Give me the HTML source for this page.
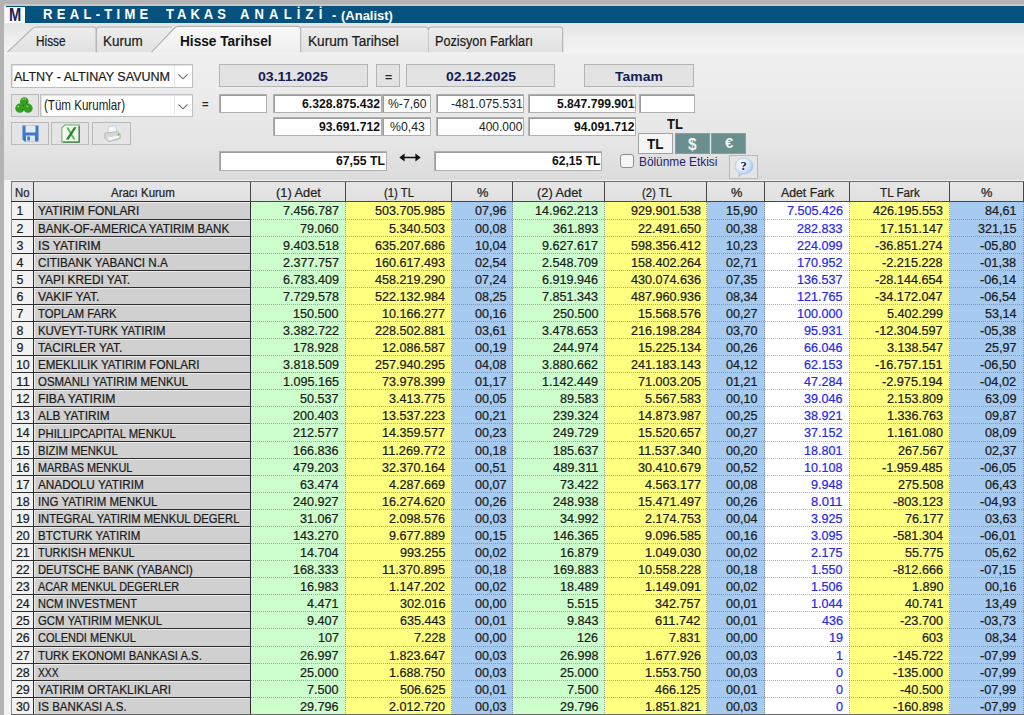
<!DOCTYPE html>
<html lang="tr"><head><meta charset="utf-8"><title>REAL-TIME TAKAS ANALİZİ - (Analist)</title>
<style>
html,body{margin:0;padding:0;}
html{background:#b3b3b3;overflow:hidden;}
body{width:1024px;height:715px;overflow:hidden;position:relative;background:#b3b3b3;font-family:"Liberation Sans",sans-serif;font-size:12.6px;color:#1a1a1a;}
div,span{box-sizing:border-box;}
.a{position:absolute;}
.t{position:absolute;white-space:nowrap;transform-origin:0 50%;display:inline-block;}
.k{-webkit-text-stroke:0.22px currentColor;}

</style></head><body>
<div class="a" style="left:4px;top:4px;width:1020px;height:711px;background:#ececec;"></div>
<div class="a" style="left:4px;top:4px;width:1020px;height:2px;background:#c8c8c8;"></div>
<div class="a" style="left:5.5px;top:6px;width:1019px;height:17px;background:#05527f;"></div>
<div class="a" style="left:5.4px;top:7px;width:19.3px;height:15.8px;background:#fdfdfd;"></div>
<span class="t" style="left:8.90px;top:4.95px;height:21px;line-height:21px;font-size:17.6px;color:#1c1c5c;font-weight:bold;transform:scaleX(0.8321);">M</span>
<span class="t" style="left:43.2px;top:6.07px;height:17px;line-height:17px;font-size:14.8px;font-weight:bold;color:#fff;letter-spacing:4.886px;transform:scaleX(0.88);">REAL-TIME</span>
<span class="t" style="left:166px;top:6.07px;height:17px;line-height:17px;font-size:14.8px;font-weight:bold;color:#fff;letter-spacing:4.576px;transform:scaleX(0.88);">TAKAS</span>
<span class="t" style="left:240px;top:6.07px;height:17px;line-height:17px;font-size:14.8px;font-weight:bold;color:#fff;letter-spacing:5.859px;transform:scaleX(0.88);">ANALİZİ</span>
<span class="t" style="left:331.50px;top:7.46px;height:17px;line-height:17px;font-size:14.4px;color:#fff;font-weight:bold;transform:scaleX(0.8758);">-</span>
<span class="t" style="left:341.00px;top:8.18px;height:16px;line-height:16px;font-size:13.2px;color:#fff;font-weight:bold;transform:scaleX(0.9848);">(Analist)</span>
<div class="a" style="left:4px;top:23px;width:1020px;height:29px;background:linear-gradient(#e4e4e4,#ededed 45%,#f3f3f3);"></div>
<div class="a" style="left:4px;top:52.2px;width:1020px;height:129.8px;background:linear-gradient(#f5f5f5 0,#efefef 2.5px,#ececec 30%,#e5e5e5 70%,#dbdbdb 100%);"></div>
<div class="a" style="left:4px;top:180px;width:1020px;height:535px;background:#f2f2f2;"></div>
<svg class="a" style="left:0;top:23px" width="1024" height="31" viewBox="0 23 1024 31">
<defs><linearGradient id="tg" x1="0" y1="0" x2="0" y2="1"><stop offset="0" stop-color="#ededed"/><stop offset="1" stop-color="#e1e1e1"/></linearGradient>
<linearGradient id="ta" x1="0" y1="0" x2="0" y2="1"><stop offset="0" stop-color="#f8f8f8"/><stop offset="1" stop-color="#efefef"/></linearGradient></defs>
<path d="M7.4 52.2 L32.3 28.6 Q33.8 27 36.5 27 L93.3 27 Q96.3 27 96.3 30 L96.3 52.2 Z" fill="url(#tg)" stroke="none"/>
<path d="M7.4 52.2 L32.3 28.6 Q33.8 27 36.5 27 L93.3 27 Q96.3 27 96.3 30 L96.3 52.2" fill="none" stroke="#b0b0b0" stroke-width="1.1"/>
<path d="M96.3 52.2 L96.3 30 Q96.3 27 99.3 27 L172 27 L151 52.2 Z" fill="url(#tg)" stroke="none"/>
<path d="M96.3 52.2 L96.3 30 Q96.3 27 99.3 27 L172 27" fill="none" stroke="#b0b0b0" stroke-width="1.1"/>
<path d="M300.7 52.2 L300.7 30 Q300.7 27 303.7 27 L425.5 27 Q428.5 27 428.5 30 L428.5 52.2 Z" fill="url(#tg)" stroke="none"/>
<path d="M300.7 27 L425.5 27 Q428.5 27 428.5 30 L428.5 52.2" fill="none" stroke="#b0b0b0" stroke-width="1.1"/>
<path d="M428.5 52.2 L428.5 30 Q428.5 27 431.5 27 L559.7 27 Q562.7 27 562.7 30 L562.7 52.2 Z" fill="url(#tg)" stroke="none"/>
<path d="M428.5 30 Q428.5 27 431.5 27 L559.7 27 Q562.7 27 562.7 30 L562.7 52.2" fill="none" stroke="#b0b0b0" stroke-width="1.1"/>
<path d="M151 53 L174.5 28 Q176 26.4 179 26.4 L297.7 26.4 Q300.7 26.4 300.7 29.4 L300.7 53 Z" fill="url(#ta)" stroke="none"/>
<path d="M151.5 52.2 L174.5 28 Q176 26.4 179 26.4 L297.7 26.4 Q300.7 26.4 300.7 29.4 L300.7 52.2" fill="none" stroke="#b0b0b0" stroke-width="1.1"/>
</svg>
<span class="t k" style="left:36.00px;top:33.40px;height:17px;line-height:17px;font-size:14px;color:#1a1a1a;transform:scaleX(0.8455);">Hisse</span>
<span class="t k" style="left:102.80px;top:33.40px;height:17px;line-height:17px;font-size:14px;color:#1a1a1a;transform:scaleX(0.9604);">Kurum</span>
<span class="t" style="left:179.50px;top:33.40px;height:17px;line-height:17px;font-size:14px;color:#111;font-weight:bold;transform:scaleX(0.9745);">Hisse Tarihsel</span>
<span class="t k" style="left:307.80px;top:33.40px;height:17px;line-height:17px;font-size:14px;color:#1a1a1a;transform:scaleX(0.9762);">Kurum Tarihsel</span>
<span class="t k" style="left:434.70px;top:33.40px;height:17px;line-height:17px;font-size:14px;color:#1a1a1a;transform:scaleX(0.9053);">Pozisyon Farkları</span>
<div class="a" style="left:10.5px;top:64px;width:182.5px;height:23.5px;background:#fff;border:1px solid #bebebe;box-shadow:inset 1px 1px 0 #e2e2e2;"></div>
<span class="t k" style="left:13.80px;top:68.90px;height:16px;line-height:16px;font-size:13.7px;color:#1a1a1a;transform:scaleX(0.9159);">ALTNY - ALTINAY SAVUNM</span>
<div class="a" style="left:173.5px;top:65.5px;width:1px;height:20.5px;background:#e9e9e9;"></div>
<svg class="a" style="left:177.0px;top:73.05px" width="12" height="8" viewBox="0 0 12 8"><path d="M1.5 1.5 L6 5.8 L10.5 1.5" fill="none" stroke="#707070" stroke-width="1.1"/></svg>
<div class="a" style="left:40px;top:94.3px;width:153px;height:22.7px;background:#fff;border:1px solid #bebebe;box-shadow:inset 1px 1px 0 #e2e2e2;"></div>
<span class="t" style="left:43.90px;top:96.90px;height:17px;line-height:17px;font-size:14.3px;color:#1a1a1a;transform:scaleX(0.8091);">(Tüm Kurumlar)</span>
<div class="a" style="left:173.5px;top:95.8px;width:1px;height:19.7px;background:#e9e9e9;"></div>
<svg class="a" style="left:177.0px;top:102.94999999999999px" width="12" height="8" viewBox="0 0 12 8"><path d="M1.5 1.5 L6 5.8 L10.5 1.5" fill="none" stroke="#707070" stroke-width="1.1"/></svg>
<div class="a" style="left:10.5px;top:94.3px;width:28.3px;height:22.7px;background:#e5e5e5;border:1px solid #b9b9b9;"></div>
<div class="a" style="left:10.5px;top:122.3px;width:38.3px;height:23.2px;background:#e5e5e5;border:1px solid #b9b9b9;"></div>
<div class="a" style="left:51.4px;top:122.3px;width:38.1px;height:23.2px;background:#e5e5e5;border:1px solid #b9b9b9;"></div>
<div class="a" style="left:92.3px;top:122.3px;width:38.3px;height:23.2px;background:#e5e5e5;border:1px solid #b9b9b9;"></div>
<svg class="a" style="left:15px;top:96.5px" width="18" height="17" viewBox="0 0 18 17"><g fill="#33a022"><circle cx="9.3" cy="4.6" r="4.3"/><circle cx="4.9" cy="11.2" r="4.6"/><circle cx="13" cy="11.2" r="4.6"/><rect x="5" y="6" width="8" height="6"/></g><g fill="#9be070"><circle cx="8" cy="2.2" r="0.8"/><circle cx="10.4" cy="2" r="0.7"/><circle cx="3.3" cy="9.6" r="0.8"/><circle cx="12.2" cy="9.4" r="0.8"/></g><g fill="#1c5c18"><circle cx="11.6" cy="5.4" r="0.6"/><circle cx="8.2" cy="8.4" r="0.6"/><circle cx="7.4" cy="12.6" r="0.6"/><circle cx="15" cy="12" r="0.6"/></g></svg>
<svg class="a" style="left:21.5px;top:125px" width="17" height="17" viewBox="0 0 17 17"><path d="M0.5 0.5 H16.5 V16.5 H2.5 L0.5 14.5 Z" fill="#3a7ac8"/><rect x="3.5" y="0.5" width="10" height="7" fill="#e4e9f0"/><rect x="4" y="10.5" width="9" height="6" fill="#dfe6ee"/><rect x="5.3" y="11.5" width="2.7" height="4" fill="#3a7ac8"/></svg>
<svg class="a" style="left:61px;top:123.7px" width="19" height="19" viewBox="0 0 19 19"><path d="M4 0.8 H18.2 V18.2 H0.8 V4 Z" fill="#f3f9f0" stroke="#7dbb7a" stroke-width="1.3"/><path d="M18.2 2 V18.2 H2" fill="none" stroke="#3c8447" stroke-width="1.3"/><path d="M5.3 3.6 H7.6 L14.4 15.4 H12.1 Z" fill="#62bb5e"/><path d="M13 3.3 H15.6 L7.6 15.6 H4.8 Z" fill="#23822a"/></svg>
<svg class="a" style="left:103.5px;top:124.5px" width="17" height="18" viewBox="0 0 17 18"><path d="M4.5 1.5 L11.5 0.8 L13 7 L4 8 Z" fill="#f4f8fc" stroke="#b5c6d8" stroke-width="0.7"/><path d="M0.8 8.2 L13.5 6.6 L16.3 9 L16.3 13.5 L5 16.8 L0.8 13 Z" fill="#d6d6d6" stroke="#acacac" stroke-width="0.7"/><path d="M3.5 12.6 L15 10.4 L15 12.6 L5 15.4 Z" fill="#f6f6f6"/><circle cx="14.4" cy="9.6" r="0.9" fill="#46b24a"/></svg>
<span class="t" style="left:202.30px;top:97.94px;height:13px;line-height:13px;font-size:11px;color:#222;font-weight:bold;transform:scaleX(1.0274);">=</span>
<div class="a" style="left:218.6px;top:64.4px;width:149.1px;height:23.1px;background:#e3e3e3;border:1px solid #b4b4b4;"></div>
<span class="t" style="left:257.70px;top:68.94px;height:16px;line-height:16px;font-size:13.6px;color:#141c56;font-weight:bold;transform:scaleX(1.0384);">03.11.2025</span>
<div class="a" style="left:375.8px;top:64.4px;width:24.4px;height:23.1px;background:#e3e3e3;border:1px solid #b4b4b4;"></div>
<span class="t" style="left:384.80px;top:70.54px;height:13px;line-height:13px;font-size:11px;color:#222;font-weight:bold;transform:scaleX(1.1208);">=</span>
<div class="a" style="left:406.3px;top:64.4px;width:148.6px;height:23.1px;background:#e3e3e3;border:1px solid #b4b4b4;"></div>
<span class="t" style="left:445.50px;top:68.94px;height:16px;line-height:16px;font-size:13.6px;color:#141c56;font-weight:bold;transform:scaleX(1.0284);">02.12.2025</span>
<div class="a" style="left:583.9px;top:64.4px;width:110.1px;height:23.1px;background:#e3e3e3;border:1px solid #b4b4b4;"></div>
<span class="t" style="left:615.40px;top:68.94px;height:16px;line-height:16px;font-size:13.6px;color:#141c56;font-weight:bold;transform:scaleX(1.0255);">Tamam</span>
<div class="a" style="left:218.6px;top:93.6px;width:48px;height:19.8px;background:#fff;border:1px solid #b0b0b0;box-shadow:inset 1px 1px 0 #9c9c9c;"></div>
<div class="a" style="left:272.5px;top:93.6px;width:109.1px;height:19.8px;background:#fff;border:1px solid #b0b0b0;box-shadow:inset 1px 1px 0 #9c9c9c;"></div>
<span class="t" style="left:301.70px;top:96.88px;height:15px;line-height:15px;font-size:12.6px;color:#111;font-weight:bold;transform:scaleX(0.9705);">6.328.875.432</span>
<div class="a" style="left:381.6px;top:93.6px;width:49.1px;height:19.8px;background:#fff;border:1px solid #b0b0b0;box-shadow:inset 1px 1px 0 #9c9c9c;"></div>
<span class="t" style="left:388.00px;top:96.88px;height:15px;line-height:15px;font-size:12.6px;color:#222;transform:scaleX(0.9669);">%-7,60</span>
<div class="a" style="left:436.2px;top:93.6px;width:88px;height:19.8px;background:#fff;border:1px solid #b0b0b0;box-shadow:inset 1px 1px 0 #9c9c9c;"></div>
<span class="t" style="left:450.60px;top:96.88px;height:15px;line-height:15px;font-size:12.6px;color:#222;transform:scaleX(0.9668);">-481.075.531</span>
<div class="a" style="left:527.5px;top:93.6px;width:108.7px;height:19.8px;background:#fff;border:1px solid #b0b0b0;box-shadow:inset 1px 1px 0 #9c9c9c;"></div>
<span class="t" style="left:556.60px;top:96.88px;height:15px;line-height:15px;font-size:12.6px;color:#111;font-weight:bold;transform:scaleX(0.9630);">5.847.799.901</span>
<div class="a" style="left:638.6px;top:93.6px;width:56.4px;height:19.8px;background:#fff;border:1px solid #b0b0b0;box-shadow:inset 1px 1px 0 #9c9c9c;"></div>
<div class="a" style="left:272.5px;top:117.2px;width:109.1px;height:19.2px;background:#fff;border:1px solid #b0b0b0;box-shadow:inset 1px 1px 0 #9c9c9c;"></div>
<span class="t" style="left:318.90px;top:119.98px;height:15px;line-height:15px;font-size:12.6px;color:#111;font-weight:bold;transform:scaleX(0.9673);">93.691.712</span>
<div class="a" style="left:381.6px;top:117.2px;width:49.1px;height:19.2px;background:#fff;border:1px solid #b0b0b0;box-shadow:inset 1px 1px 0 #9c9c9c;"></div>
<span class="t" style="left:390.00px;top:119.98px;height:15px;line-height:15px;font-size:12.6px;color:#222;transform:scaleX(0.9741);">%0,43</span>
<div class="a" style="left:436.2px;top:117.2px;width:88px;height:19.2px;background:#fff;border:1px solid #b0b0b0;box-shadow:inset 1px 1px 0 #9c9c9c;"></div>
<span class="t" style="left:479.00px;top:119.98px;height:15px;line-height:15px;font-size:12.6px;color:#222;transform:scaleX(0.9529);">400.000</span>
<div class="a" style="left:527.5px;top:117.2px;width:108.7px;height:19.2px;background:#fff;border:1px solid #b0b0b0;box-shadow:inset 1px 1px 0 #9c9c9c;"></div>
<span class="t" style="left:573.70px;top:119.98px;height:15px;line-height:15px;font-size:12.6px;color:#111;font-weight:bold;transform:scaleX(0.9594);">94.091.712</span>
<div class="a" style="left:218.6px;top:151px;width:168.2px;height:19.6px;background:#fff;border:1px solid #b0b0b0;box-shadow:inset 1px 1px 0 #9c9c9c;"></div>
<span class="t" style="left:336.00px;top:154.28px;height:15px;line-height:15px;font-size:12.6px;color:#111;font-weight:bold;transform:scaleX(0.9717);">67,55 TL</span>
<div class="a" style="left:434.4px;top:151px;width:167.8px;height:19.6px;background:#fff;border:1px solid #b0b0b0;box-shadow:inset 1px 1px 0 #9c9c9c;"></div>
<span class="t" style="left:551.50px;top:154.28px;height:15px;line-height:15px;font-size:12.6px;color:#111;font-weight:bold;transform:scaleX(0.9618);">62,15 TL</span>
<svg class="a" style="left:399.3px;top:152.3px" width="22" height="11" viewBox="0 0 22 11"><path d="M0.3 5.5 L5.6 1.6 V4.7 H16.4 V1.6 L21.7 5.5 L16.4 9.4 V6.3 H5.6 V9.4 Z" fill="#111"/></svg>
<span class="t" style="left:666.80px;top:116.37px;height:17px;line-height:17px;font-size:13.8px;color:#111;font-weight:bold;transform:scaleX(0.9372);">TL</span>
<div class="a" style="left:638.4px;top:132.5px;width:34.8px;height:21px;background:#f5f5f5;border:1px solid #a2a2a2;"></div>
<span class="t" style="left:647.00px;top:135.70px;height:17px;line-height:17px;font-size:14px;color:#111;font-weight:bold;transform:scaleX(0.9647);">TL</span>
<div class="a" style="left:675px;top:132.5px;width:35px;height:21px;background:#6b8e8e;border:1px solid #86a0a0;"></div>
<span class="t" style="left:688.30px;top:134.81px;height:19px;line-height:19px;font-size:16px;color:#f4f4f4;font-weight:bold;transform:scaleX(0.9665);">$</span>
<div class="a" style="left:711.3px;top:132.5px;width:34.7px;height:21px;background:#6b8e8e;border:1px solid #86a0a0;"></div>
<span class="t" style="left:724.50px;top:135.33px;height:17px;line-height:17px;font-size:14.5px;color:#eef2f2;font-weight:bold;transform:scaleX(1.0168);">€</span>
<div class="a" style="left:620.3px;top:154.3px;width:14.2px;height:14.2px;background:#f6f6f6;border:1px solid #8f8f8f;border-radius:3px;"></div>
<span class="t" style="left:639.00px;top:154.34px;height:16px;line-height:16px;font-size:13.6px;color:#1e2470;transform:scaleX(0.8716);">Bölünme Etkisi</span>
<div class="a" style="left:729.2px;top:155.2px;width:28.5px;height:23.4px;background:#e5e5e5;border:1px solid #b9b9b9;"></div>
<svg class="a" style="left:732.5px;top:156.5px" width="22" height="21" viewBox="0 0 22 21"><defs><radialGradient id="hg" cx="0.38" cy="0.3" r="0.8"><stop offset="0" stop-color="#ffffff"/><stop offset="0.5" stop-color="#d6e6f8"/><stop offset="1" stop-color="#86b0e2"/></radialGradient></defs><path d="M10.6 1 A9 8 0 1 1 9 16.8 L6 19.8 L6 15.6 A9 8 0 0 1 10.6 1 Z" fill="url(#hg)" stroke="#a9c3e3" stroke-width="0.7"/><text x="10.6" y="13.4" font-family="Liberation Serif, serif" font-weight="bold" font-size="12.5" text-anchor="middle" fill="#15206c">?</text></svg>
<div class="a" style="left:11px;top:181px;width:1013px;height:21px;background:#484848;"></div>
<div class="a" style="left:11px;top:181px;width:1013px;height:1px;background:#6e6e6e;"></div>
<div class="a" style="left:11px;top:181px;width:1px;height:20px;background:#7c7c7c;"></div>
<div class="a" style="left:11px;top:201px;width:240px;height:514px;background:#2e2e2e;"></div>
<div class="a" style="left:12px;top:182px;width:21px;height:19px;background:linear-gradient(#e6e6e6,#e1e1e1);"></div>
<span class="t k" style="left:15.45px;top:185.89px;height:15px;line-height:15px;font-size:12.3px;color:#222;transform:scaleX(0.9222);">No</span>
<div class="a" style="left:34px;top:182px;width:216px;height:19px;background:linear-gradient(#e6e6e6,#e1e1e1);"></div>
<span class="t k" style="left:110.90px;top:185.89px;height:15px;line-height:15px;font-size:12.3px;color:#222;transform:scaleX(0.9334);">Aracı Kurum</span>
<div class="a" style="left:251px;top:182px;width:94px;height:19px;background:linear-gradient(#e6e6e6,#e1e1e1);"></div>
<span class="t k" style="left:276.35px;top:185.89px;height:15px;line-height:15px;font-size:12.3px;color:#222;transform:scaleX(1.0424);">(1) Adet</span>
<div class="a" style="left:346px;top:182px;width:105px;height:19px;background:linear-gradient(#e6e6e6,#e1e1e1);"></div>
<span class="t k" style="left:384.20px;top:185.89px;height:15px;line-height:15px;font-size:12.3px;color:#222;transform:scaleX(0.9208);">(1) TL</span>
<div class="a" style="left:452px;top:182px;width:60px;height:19px;background:linear-gradient(#e6e6e6,#e1e1e1);"></div>
<span class="t k" style="left:477.05px;top:185.89px;height:15px;line-height:15px;font-size:12.3px;color:#222;transform:scaleX(1.0424);">%</span>
<div class="a" style="left:513px;top:182px;width:91px;height:19px;background:linear-gradient(#e6e6e6,#e1e1e1);"></div>
<span class="t k" style="left:536.80px;top:185.89px;height:15px;line-height:15px;font-size:12.3px;color:#222;transform:scaleX(1.0424);">(2) Adet</span>
<div class="a" style="left:605px;top:182px;width:101px;height:19px;background:linear-gradient(#e6e6e6,#e1e1e1);"></div>
<span class="t k" style="left:641.55px;top:185.89px;height:15px;line-height:15px;font-size:12.3px;color:#222;transform:scaleX(0.9208);">(2) TL</span>
<div class="a" style="left:707px;top:182px;width:57px;height:19px;background:linear-gradient(#e6e6e6,#e1e1e1);"></div>
<span class="t k" style="left:730.75px;top:185.89px;height:15px;line-height:15px;font-size:12.3px;color:#222;transform:scaleX(1.0424);">%</span>
<div class="a" style="left:765px;top:182px;width:84px;height:19px;background:linear-gradient(#e6e6e6,#e1e1e1);"></div>
<span class="t k" style="left:780.95px;top:185.89px;height:15px;line-height:15px;font-size:12.3px;color:#222;">Adet Fark</span>
<div class="a" style="left:850px;top:182px;width:99px;height:19px;background:linear-gradient(#e6e6e6,#e1e1e1);"></div>
<span class="t k" style="left:880.20px;top:185.89px;height:15px;line-height:15px;font-size:12.3px;color:#222;transform:scaleX(0.9495);">TL Fark</span>
<div class="a" style="left:950px;top:182px;width:73px;height:19px;background:linear-gradient(#e6e6e6,#e1e1e1);"></div>
<span class="t k" style="left:981.40px;top:185.89px;height:15px;line-height:15px;font-size:12.3px;color:#222;transform:scaleX(1.0424);">%</span>
<div class="a" style="left:251px;top:202px;width:95px;height:513px;background:#ccffcc;"></div>
<div class="a" style="left:346px;top:202px;width:106px;height:513px;background:#ffff80;"></div>
<div class="a" style="left:452px;top:202px;width:61px;height:513px;background:#a6caf0;"></div>
<div class="a" style="left:513px;top:202px;width:92px;height:513px;background:#ccffcc;"></div>
<div class="a" style="left:605px;top:202px;width:102px;height:513px;background:#ffff80;"></div>
<div class="a" style="left:707px;top:202px;width:58px;height:513px;background:#a6caf0;"></div>
<div class="a" style="left:765px;top:202px;width:85px;height:513px;background:#ffffff;"></div>
<div class="a" style="left:850px;top:202px;width:100px;height:513px;background:#ffff80;"></div>
<div class="a" style="left:950px;top:202px;width:74px;height:513px;background:#a6caf0;"></div>
<div class="a" style="left:345px;top:202px;width:0px;height:513px;border-left:1px dotted rgba(100,100,100,.5);"></div>
<div class="a" style="left:451px;top:202px;width:0px;height:513px;border-left:1px dotted rgba(100,100,100,.5);"></div>
<div class="a" style="left:512px;top:202px;width:0px;height:513px;border-left:1px dotted rgba(100,100,100,.5);"></div>
<div class="a" style="left:604px;top:202px;width:0px;height:513px;border-left:1px dotted rgba(100,100,100,.5);"></div>
<div class="a" style="left:706px;top:202px;width:0px;height:513px;border-left:1px dotted rgba(100,100,100,.5);"></div>
<div class="a" style="left:764px;top:202px;width:0px;height:513px;border-left:1px dotted rgba(100,100,100,.5);"></div>
<div class="a" style="left:849px;top:202px;width:0px;height:513px;border-left:1px dotted rgba(100,100,100,.5);"></div>
<div class="a" style="left:949px;top:202px;width:0px;height:513px;border-left:1px dotted rgba(100,100,100,.5);"></div>
<div class="a" style="left:1023px;top:202px;width:0px;height:513px;border-left:1px dotted rgba(100,100,100,.5);"></div>
<div class="a" style="left:12px;top:202px;width:21px;height:17px;background:#f2f2f2;"></div>
<div class="a" style="left:34px;top:202px;width:216px;height:17px;background:#d0d0d0;border-left:1px solid #ececec;border-top:1px solid #ebebeb;"></div>
<div class="a" style="left:12px;top:220px;width:21px;height:16px;background:#f2f2f2;"></div>
<div class="a" style="left:34px;top:220px;width:216px;height:16px;background:#d0d0d0;border-left:1px solid #ececec;border-top:1px solid #ebebeb;"></div>
<div class="a" style="left:12px;top:237px;width:21px;height:16px;background:#f2f2f2;"></div>
<div class="a" style="left:34px;top:237px;width:216px;height:16px;background:#d0d0d0;border-left:1px solid #ececec;border-top:1px solid #ebebeb;"></div>
<div class="a" style="left:12px;top:254px;width:21px;height:16px;background:#f2f2f2;"></div>
<div class="a" style="left:34px;top:254px;width:216px;height:16px;background:#d0d0d0;border-left:1px solid #ececec;border-top:1px solid #ebebeb;"></div>
<div class="a" style="left:12px;top:271px;width:21px;height:16px;background:#f2f2f2;"></div>
<div class="a" style="left:34px;top:271px;width:216px;height:16px;background:#d0d0d0;border-left:1px solid #ececec;border-top:1px solid #ebebeb;"></div>
<div class="a" style="left:12px;top:288px;width:21px;height:16px;background:#f2f2f2;"></div>
<div class="a" style="left:34px;top:288px;width:216px;height:16px;background:#d0d0d0;border-left:1px solid #ececec;border-top:1px solid #ebebeb;"></div>
<div class="a" style="left:12px;top:305px;width:21px;height:16px;background:#f2f2f2;"></div>
<div class="a" style="left:34px;top:305px;width:216px;height:16px;background:#d0d0d0;border-left:1px solid #ececec;border-top:1px solid #ebebeb;"></div>
<div class="a" style="left:12px;top:322px;width:21px;height:16px;background:#f2f2f2;"></div>
<div class="a" style="left:34px;top:322px;width:216px;height:16px;background:#d0d0d0;border-left:1px solid #ececec;border-top:1px solid #ebebeb;"></div>
<div class="a" style="left:12px;top:339px;width:21px;height:16px;background:#f2f2f2;"></div>
<div class="a" style="left:34px;top:339px;width:216px;height:16px;background:#d0d0d0;border-left:1px solid #ececec;border-top:1px solid #ebebeb;"></div>
<div class="a" style="left:12px;top:356px;width:21px;height:16px;background:#f2f2f2;"></div>
<div class="a" style="left:34px;top:356px;width:216px;height:16px;background:#d0d0d0;border-left:1px solid #ececec;border-top:1px solid #ebebeb;"></div>
<div class="a" style="left:12px;top:373px;width:21px;height:16px;background:#f2f2f2;"></div>
<div class="a" style="left:34px;top:373px;width:216px;height:16px;background:#d0d0d0;border-left:1px solid #ececec;border-top:1px solid #ebebeb;"></div>
<div class="a" style="left:12px;top:390px;width:21px;height:16px;background:#f2f2f2;"></div>
<div class="a" style="left:34px;top:390px;width:216px;height:16px;background:#d0d0d0;border-left:1px solid #ececec;border-top:1px solid #ebebeb;"></div>
<div class="a" style="left:12px;top:407px;width:21px;height:16px;background:#f2f2f2;"></div>
<div class="a" style="left:34px;top:407px;width:216px;height:16px;background:#d0d0d0;border-left:1px solid #ececec;border-top:1px solid #ebebeb;"></div>
<div class="a" style="left:12px;top:424px;width:21px;height:17px;background:#f2f2f2;"></div>
<div class="a" style="left:34px;top:424px;width:216px;height:17px;background:#d0d0d0;border-left:1px solid #ececec;border-top:1px solid #ebebeb;"></div>
<div class="a" style="left:12px;top:442px;width:21px;height:16px;background:#f2f2f2;"></div>
<div class="a" style="left:34px;top:442px;width:216px;height:16px;background:#d0d0d0;border-left:1px solid #ececec;border-top:1px solid #ebebeb;"></div>
<div class="a" style="left:12px;top:459px;width:21px;height:16px;background:#f2f2f2;"></div>
<div class="a" style="left:34px;top:459px;width:216px;height:16px;background:#d0d0d0;border-left:1px solid #ececec;border-top:1px solid #ebebeb;"></div>
<div class="a" style="left:12px;top:476px;width:21px;height:16px;background:#f2f2f2;"></div>
<div class="a" style="left:34px;top:476px;width:216px;height:16px;background:#d0d0d0;border-left:1px solid #ececec;border-top:1px solid #ebebeb;"></div>
<div class="a" style="left:12px;top:493px;width:21px;height:16px;background:#f2f2f2;"></div>
<div class="a" style="left:34px;top:493px;width:216px;height:16px;background:#d0d0d0;border-left:1px solid #ececec;border-top:1px solid #ebebeb;"></div>
<div class="a" style="left:12px;top:510px;width:21px;height:16px;background:#f2f2f2;"></div>
<div class="a" style="left:34px;top:510px;width:216px;height:16px;background:#d0d0d0;border-left:1px solid #ececec;border-top:1px solid #ebebeb;"></div>
<div class="a" style="left:12px;top:527px;width:21px;height:16px;background:#f2f2f2;"></div>
<div class="a" style="left:34px;top:527px;width:216px;height:16px;background:#d0d0d0;border-left:1px solid #ececec;border-top:1px solid #ebebeb;"></div>
<div class="a" style="left:12px;top:544px;width:21px;height:16px;background:#f2f2f2;"></div>
<div class="a" style="left:34px;top:544px;width:216px;height:16px;background:#d0d0d0;border-left:1px solid #ececec;border-top:1px solid #ebebeb;"></div>
<div class="a" style="left:12px;top:561px;width:21px;height:16px;background:#f2f2f2;"></div>
<div class="a" style="left:34px;top:561px;width:216px;height:16px;background:#d0d0d0;border-left:1px solid #ececec;border-top:1px solid #ebebeb;"></div>
<div class="a" style="left:12px;top:578px;width:21px;height:16px;background:#f2f2f2;"></div>
<div class="a" style="left:34px;top:578px;width:216px;height:16px;background:#d0d0d0;border-left:1px solid #ececec;border-top:1px solid #ebebeb;"></div>
<div class="a" style="left:12px;top:595px;width:21px;height:16px;background:#f2f2f2;"></div>
<div class="a" style="left:34px;top:595px;width:216px;height:16px;background:#d0d0d0;border-left:1px solid #ececec;border-top:1px solid #ebebeb;"></div>
<div class="a" style="left:12px;top:612px;width:21px;height:16px;background:#f2f2f2;"></div>
<div class="a" style="left:34px;top:612px;width:216px;height:16px;background:#d0d0d0;border-left:1px solid #ececec;border-top:1px solid #ebebeb;"></div>
<div class="a" style="left:12px;top:629px;width:21px;height:17px;background:#f2f2f2;"></div>
<div class="a" style="left:34px;top:629px;width:216px;height:17px;background:#d0d0d0;border-left:1px solid #ececec;border-top:1px solid #ebebeb;"></div>
<div class="a" style="left:12px;top:647px;width:21px;height:16px;background:#f2f2f2;"></div>
<div class="a" style="left:34px;top:647px;width:216px;height:16px;background:#d0d0d0;border-left:1px solid #ececec;border-top:1px solid #ebebeb;"></div>
<div class="a" style="left:12px;top:664px;width:21px;height:16px;background:#f2f2f2;"></div>
<div class="a" style="left:34px;top:664px;width:216px;height:16px;background:#d0d0d0;border-left:1px solid #ececec;border-top:1px solid #ebebeb;"></div>
<div class="a" style="left:12px;top:681px;width:21px;height:16px;background:#f2f2f2;"></div>
<div class="a" style="left:34px;top:681px;width:216px;height:16px;background:#d0d0d0;border-left:1px solid #ececec;border-top:1px solid #ebebeb;"></div>
<div class="a" style="left:12px;top:698px;width:21px;height:16px;background:#f2f2f2;"></div>
<div class="a" style="left:34px;top:698px;width:216px;height:16px;background:#d0d0d0;border-left:1px solid #ececec;border-top:1px solid #ebebeb;"></div>
<div class="a" style="left:11px;top:202px;width:1px;height:514px;background:#8e8e8e;"></div>
<span class="t k" style="left:16.40px;top:204.45px;height:15px;line-height:15px;font-size:12.4px;color:#1a1a1a;">1</span>
<span class="t k" style="left:38.30px;top:204.49px;height:15px;line-height:15px;font-size:12.3px;color:#1a1a1a;transform:scaleX(0.9666);">YATIRIM FONLARI</span>
<span class="t k" style="left:282.91px;top:204.42px;height:15px;line-height:15px;font-size:12.5px;color:#1a1a1a;transform:scaleX(1.0068);">7.456.787</span>
<span class="t k" style="left:375.11px;top:204.42px;height:15px;line-height:15px;font-size:12.5px;color:#1a1a1a;transform:scaleX(1.0068);">503.705.985</span>
<span class="t k" style="left:474.51px;top:204.42px;height:15px;line-height:15px;font-size:12.5px;color:#1a1a1a;transform:scaleX(1.0068);">07,96</span>
<span class="t k" style="left:535.11px;top:204.42px;height:15px;line-height:15px;font-size:12.5px;color:#1a1a1a;transform:scaleX(1.0068);">14.962.213</span>
<span class="t k" style="left:630.61px;top:204.42px;height:15px;line-height:15px;font-size:12.5px;color:#1a1a1a;transform:scaleX(1.0068);">929.901.538</span>
<span class="t k" style="left:726.41px;top:204.42px;height:15px;line-height:15px;font-size:12.5px;color:#1a1a1a;transform:scaleX(1.0068);">15,90</span>
<span class="t k" style="left:786.81px;top:204.42px;height:15px;line-height:15px;font-size:12.5px;color:#2828f0;transform:scaleX(1.0068);">7.505.426</span>
<span class="t k" style="left:873.01px;top:204.42px;height:15px;line-height:15px;font-size:12.5px;color:#1a1a1a;transform:scaleX(1.0068);">426.195.553</span>
<span class="t k" style="left:985.11px;top:204.42px;height:15px;line-height:15px;font-size:12.5px;color:#1a1a1a;transform:scaleX(1.0068);">84,61</span>
<span class="t k" style="left:16.40px;top:221.53px;height:15px;line-height:15px;font-size:12.4px;color:#1a1a1a;">2</span>
<span class="t k" style="left:38.30px;top:221.57px;height:15px;line-height:15px;font-size:12.3px;color:#1a1a1a;transform:scaleX(0.9451);">BANK-OF-AMERICA YATIRIM BANK</span>
<div class="a" style="left:251px;top:219px;width:773px;height:0px;border-top:1px dotted rgba(100,100,100,.5);"></div>
<span class="t k" style="left:300.41px;top:221.50px;height:15px;line-height:15px;font-size:12.5px;color:#1a1a1a;transform:scaleX(1.0068);">79.060</span>
<span class="t k" style="left:389.11px;top:221.50px;height:15px;line-height:15px;font-size:12.5px;color:#1a1a1a;transform:scaleX(1.0068);">5.340.503</span>
<span class="t k" style="left:474.51px;top:221.50px;height:15px;line-height:15px;font-size:12.5px;color:#1a1a1a;transform:scaleX(1.0068);">00,08</span>
<span class="t k" style="left:552.61px;top:221.50px;height:15px;line-height:15px;font-size:12.5px;color:#1a1a1a;transform:scaleX(1.0068);">361.893</span>
<span class="t k" style="left:637.61px;top:221.50px;height:15px;line-height:15px;font-size:12.5px;color:#1a1a1a;transform:scaleX(1.0068);">22.491.650</span>
<span class="t k" style="left:726.41px;top:221.50px;height:15px;line-height:15px;font-size:12.5px;color:#1a1a1a;transform:scaleX(1.0068);">00,38</span>
<span class="t k" style="left:797.31px;top:221.50px;height:15px;line-height:15px;font-size:12.5px;color:#2828f0;transform:scaleX(1.0068);">282.833</span>
<span class="t k" style="left:880.01px;top:221.50px;height:15px;line-height:15px;font-size:12.5px;color:#1a1a1a;transform:scaleX(1.0068);">17.151.147</span>
<span class="t k" style="left:978.11px;top:221.50px;height:15px;line-height:15px;font-size:12.5px;color:#1a1a1a;transform:scaleX(1.0068);">321,15</span>
<span class="t k" style="left:16.40px;top:238.61px;height:15px;line-height:15px;font-size:12.4px;color:#1a1a1a;">3</span>
<span class="t k" style="left:38.30px;top:238.65px;height:15px;line-height:15px;font-size:12.3px;color:#1a1a1a;transform:scaleX(0.9955);">IS YATIRIM</span>
<div class="a" style="left:251px;top:236px;width:773px;height:0px;border-top:1px dotted rgba(100,100,100,.5);"></div>
<span class="t k" style="left:282.91px;top:238.58px;height:15px;line-height:15px;font-size:12.5px;color:#1a1a1a;transform:scaleX(1.0068);">9.403.518</span>
<span class="t k" style="left:375.11px;top:238.58px;height:15px;line-height:15px;font-size:12.5px;color:#1a1a1a;transform:scaleX(1.0068);">635.207.686</span>
<span class="t k" style="left:474.51px;top:238.58px;height:15px;line-height:15px;font-size:12.5px;color:#1a1a1a;transform:scaleX(1.0068);">10,04</span>
<span class="t k" style="left:542.11px;top:238.58px;height:15px;line-height:15px;font-size:12.5px;color:#1a1a1a;transform:scaleX(1.0068);">9.627.617</span>
<span class="t k" style="left:630.61px;top:238.58px;height:15px;line-height:15px;font-size:12.5px;color:#1a1a1a;transform:scaleX(1.0068);">598.356.412</span>
<span class="t k" style="left:726.41px;top:238.58px;height:15px;line-height:15px;font-size:12.5px;color:#1a1a1a;transform:scaleX(1.0068);">10,23</span>
<span class="t k" style="left:797.31px;top:238.58px;height:15px;line-height:15px;font-size:12.5px;color:#2828f0;transform:scaleX(1.0068);">224.099</span>
<span class="t k" style="left:875.35px;top:238.58px;height:15px;line-height:15px;font-size:12.5px;color:#1a1a1a;transform:scaleX(1.0139);">-36.851.274</span>
<span class="t k" style="left:980.44px;top:238.58px;height:15px;line-height:15px;font-size:12.5px;color:#1a1a1a;transform:scaleX(1.0202);">-05,80</span>
<span class="t k" style="left:16.40px;top:255.69px;height:15px;line-height:15px;font-size:12.4px;color:#1a1a1a;">4</span>
<span class="t k" style="left:38.30px;top:255.73px;height:15px;line-height:15px;font-size:12.3px;color:#1a1a1a;transform:scaleX(0.9474);">CITIBANK YABANCI N.A</span>
<div class="a" style="left:251px;top:253px;width:773px;height:0px;border-top:1px dotted rgba(100,100,100,.5);"></div>
<span class="t k" style="left:282.91px;top:255.66px;height:15px;line-height:15px;font-size:12.5px;color:#1a1a1a;transform:scaleX(1.0068);">2.377.757</span>
<span class="t k" style="left:375.11px;top:255.66px;height:15px;line-height:15px;font-size:12.5px;color:#1a1a1a;transform:scaleX(1.0068);">160.617.493</span>
<span class="t k" style="left:474.51px;top:255.66px;height:15px;line-height:15px;font-size:12.5px;color:#1a1a1a;transform:scaleX(1.0068);">02,54</span>
<span class="t k" style="left:542.11px;top:255.66px;height:15px;line-height:15px;font-size:12.5px;color:#1a1a1a;transform:scaleX(1.0068);">2.548.709</span>
<span class="t k" style="left:630.61px;top:255.66px;height:15px;line-height:15px;font-size:12.5px;color:#1a1a1a;transform:scaleX(1.0068);">158.402.264</span>
<span class="t k" style="left:726.41px;top:255.66px;height:15px;line-height:15px;font-size:12.5px;color:#1a1a1a;transform:scaleX(1.0068);">02,71</span>
<span class="t k" style="left:797.31px;top:255.66px;height:15px;line-height:15px;font-size:12.5px;color:#2828f0;transform:scaleX(1.0068);">170.952</span>
<span class="t k" style="left:882.34px;top:255.66px;height:15px;line-height:15px;font-size:12.5px;color:#1a1a1a;transform:scaleX(1.0148);">-2.215.228</span>
<span class="t k" style="left:980.44px;top:255.66px;height:15px;line-height:15px;font-size:12.5px;color:#1a1a1a;transform:scaleX(1.0202);">-01,38</span>
<span class="t k" style="left:16.40px;top:272.77px;height:15px;line-height:15px;font-size:12.4px;color:#1a1a1a;">5</span>
<span class="t k" style="left:38.30px;top:272.81px;height:15px;line-height:15px;font-size:12.3px;color:#1a1a1a;transform:scaleX(0.9655);">YAPI KREDI YAT.</span>
<div class="a" style="left:251px;top:270px;width:773px;height:0px;border-top:1px dotted rgba(100,100,100,.5);"></div>
<span class="t k" style="left:282.91px;top:272.74px;height:15px;line-height:15px;font-size:12.5px;color:#1a1a1a;transform:scaleX(1.0068);">6.783.409</span>
<span class="t k" style="left:375.11px;top:272.74px;height:15px;line-height:15px;font-size:12.5px;color:#1a1a1a;transform:scaleX(1.0068);">458.219.290</span>
<span class="t k" style="left:474.51px;top:272.74px;height:15px;line-height:15px;font-size:12.5px;color:#1a1a1a;transform:scaleX(1.0068);">07,24</span>
<span class="t k" style="left:542.11px;top:272.74px;height:15px;line-height:15px;font-size:12.5px;color:#1a1a1a;transform:scaleX(1.0068);">6.919.946</span>
<span class="t k" style="left:630.61px;top:272.74px;height:15px;line-height:15px;font-size:12.5px;color:#1a1a1a;transform:scaleX(1.0068);">430.074.636</span>
<span class="t k" style="left:726.41px;top:272.74px;height:15px;line-height:15px;font-size:12.5px;color:#1a1a1a;transform:scaleX(1.0068);">07,35</span>
<span class="t k" style="left:797.31px;top:272.74px;height:15px;line-height:15px;font-size:12.5px;color:#2828f0;transform:scaleX(1.0068);">136.537</span>
<span class="t k" style="left:875.35px;top:272.74px;height:15px;line-height:15px;font-size:12.5px;color:#1a1a1a;transform:scaleX(1.0139);">-28.144.654</span>
<span class="t k" style="left:980.44px;top:272.74px;height:15px;line-height:15px;font-size:12.5px;color:#1a1a1a;transform:scaleX(1.0202);">-06,14</span>
<span class="t k" style="left:16.40px;top:289.85px;height:15px;line-height:15px;font-size:12.4px;color:#1a1a1a;">6</span>
<span class="t k" style="left:38.30px;top:289.89px;height:15px;line-height:15px;font-size:12.3px;color:#1a1a1a;transform:scaleX(0.9916);">VAKIF YAT.</span>
<div class="a" style="left:251px;top:287px;width:773px;height:0px;border-top:1px dotted rgba(100,100,100,.5);"></div>
<span class="t k" style="left:282.91px;top:289.82px;height:15px;line-height:15px;font-size:12.5px;color:#1a1a1a;transform:scaleX(1.0068);">7.729.578</span>
<span class="t k" style="left:375.11px;top:289.82px;height:15px;line-height:15px;font-size:12.5px;color:#1a1a1a;transform:scaleX(1.0068);">522.132.984</span>
<span class="t k" style="left:474.51px;top:289.82px;height:15px;line-height:15px;font-size:12.5px;color:#1a1a1a;transform:scaleX(1.0068);">08,25</span>
<span class="t k" style="left:542.11px;top:289.82px;height:15px;line-height:15px;font-size:12.5px;color:#1a1a1a;transform:scaleX(1.0068);">7.851.343</span>
<span class="t k" style="left:630.61px;top:289.82px;height:15px;line-height:15px;font-size:12.5px;color:#1a1a1a;transform:scaleX(1.0068);">487.960.936</span>
<span class="t k" style="left:726.41px;top:289.82px;height:15px;line-height:15px;font-size:12.5px;color:#1a1a1a;transform:scaleX(1.0068);">08,34</span>
<span class="t k" style="left:797.31px;top:289.82px;height:15px;line-height:15px;font-size:12.5px;color:#2828f0;transform:scaleX(1.0068);">121.765</span>
<span class="t k" style="left:875.35px;top:289.82px;height:15px;line-height:15px;font-size:12.5px;color:#1a1a1a;transform:scaleX(1.0139);">-34.172.047</span>
<span class="t k" style="left:980.44px;top:289.82px;height:15px;line-height:15px;font-size:12.5px;color:#1a1a1a;transform:scaleX(1.0202);">-06,54</span>
<span class="t k" style="left:16.40px;top:306.93px;height:15px;line-height:15px;font-size:12.4px;color:#1a1a1a;">7</span>
<span class="t k" style="left:38.30px;top:306.97px;height:15px;line-height:15px;font-size:12.3px;color:#1a1a1a;transform:scaleX(0.9141);">TOPLAM FARK</span>
<div class="a" style="left:251px;top:304px;width:773px;height:0px;border-top:1px dotted rgba(100,100,100,.5);"></div>
<span class="t k" style="left:293.41px;top:306.90px;height:15px;line-height:15px;font-size:12.5px;color:#1a1a1a;transform:scaleX(1.0068);">150.500</span>
<span class="t k" style="left:382.11px;top:306.90px;height:15px;line-height:15px;font-size:12.5px;color:#1a1a1a;transform:scaleX(1.0068);">10.166.277</span>
<span class="t k" style="left:474.51px;top:306.90px;height:15px;line-height:15px;font-size:12.5px;color:#1a1a1a;transform:scaleX(1.0068);">00,16</span>
<span class="t k" style="left:552.61px;top:306.90px;height:15px;line-height:15px;font-size:12.5px;color:#1a1a1a;transform:scaleX(1.0068);">250.500</span>
<span class="t k" style="left:637.61px;top:306.90px;height:15px;line-height:15px;font-size:12.5px;color:#1a1a1a;transform:scaleX(1.0068);">15.568.576</span>
<span class="t k" style="left:726.41px;top:306.90px;height:15px;line-height:15px;font-size:12.5px;color:#1a1a1a;transform:scaleX(1.0068);">00,27</span>
<span class="t k" style="left:797.31px;top:306.90px;height:15px;line-height:15px;font-size:12.5px;color:#2828f0;transform:scaleX(1.0068);">100.000</span>
<span class="t k" style="left:887.01px;top:306.90px;height:15px;line-height:15px;font-size:12.5px;color:#1a1a1a;transform:scaleX(1.0068);">5.402.299</span>
<span class="t k" style="left:985.11px;top:306.90px;height:15px;line-height:15px;font-size:12.5px;color:#1a1a1a;transform:scaleX(1.0068);">53,14</span>
<span class="t k" style="left:16.40px;top:324.01px;height:15px;line-height:15px;font-size:12.4px;color:#1a1a1a;">8</span>
<span class="t k" style="left:38.30px;top:324.05px;height:15px;line-height:15px;font-size:12.3px;color:#1a1a1a;transform:scaleX(0.9278);">KUVEYT-TURK YATIRIM</span>
<div class="a" style="left:251px;top:321px;width:773px;height:0px;border-top:1px dotted rgba(100,100,100,.5);"></div>
<span class="t k" style="left:282.91px;top:323.98px;height:15px;line-height:15px;font-size:12.5px;color:#1a1a1a;transform:scaleX(1.0068);">3.382.722</span>
<span class="t k" style="left:375.11px;top:323.98px;height:15px;line-height:15px;font-size:12.5px;color:#1a1a1a;transform:scaleX(1.0068);">228.502.881</span>
<span class="t k" style="left:474.51px;top:323.98px;height:15px;line-height:15px;font-size:12.5px;color:#1a1a1a;transform:scaleX(1.0068);">03,61</span>
<span class="t k" style="left:542.11px;top:323.98px;height:15px;line-height:15px;font-size:12.5px;color:#1a1a1a;transform:scaleX(1.0068);">3.478.653</span>
<span class="t k" style="left:630.61px;top:323.98px;height:15px;line-height:15px;font-size:12.5px;color:#1a1a1a;transform:scaleX(1.0068);">216.198.284</span>
<span class="t k" style="left:726.41px;top:323.98px;height:15px;line-height:15px;font-size:12.5px;color:#1a1a1a;transform:scaleX(1.0068);">03,70</span>
<span class="t k" style="left:804.31px;top:323.98px;height:15px;line-height:15px;font-size:12.5px;color:#2828f0;transform:scaleX(1.0068);">95.931</span>
<span class="t k" style="left:875.35px;top:323.98px;height:15px;line-height:15px;font-size:12.5px;color:#1a1a1a;transform:scaleX(1.0139);">-12.304.597</span>
<span class="t k" style="left:980.44px;top:323.98px;height:15px;line-height:15px;font-size:12.5px;color:#1a1a1a;transform:scaleX(1.0202);">-05,38</span>
<span class="t k" style="left:16.40px;top:341.09px;height:15px;line-height:15px;font-size:12.4px;color:#1a1a1a;">9</span>
<span class="t k" style="left:38.30px;top:341.13px;height:15px;line-height:15px;font-size:12.3px;color:#1a1a1a;transform:scaleX(0.9651);">TACIRLER YAT.</span>
<div class="a" style="left:251px;top:338px;width:773px;height:0px;border-top:1px dotted rgba(100,100,100,.5);"></div>
<span class="t k" style="left:293.41px;top:341.06px;height:15px;line-height:15px;font-size:12.5px;color:#1a1a1a;transform:scaleX(1.0068);">178.928</span>
<span class="t k" style="left:382.11px;top:341.06px;height:15px;line-height:15px;font-size:12.5px;color:#1a1a1a;transform:scaleX(1.0068);">12.086.587</span>
<span class="t k" style="left:474.51px;top:341.06px;height:15px;line-height:15px;font-size:12.5px;color:#1a1a1a;transform:scaleX(1.0068);">00,19</span>
<span class="t k" style="left:552.61px;top:341.06px;height:15px;line-height:15px;font-size:12.5px;color:#1a1a1a;transform:scaleX(1.0068);">244.974</span>
<span class="t k" style="left:637.61px;top:341.06px;height:15px;line-height:15px;font-size:12.5px;color:#1a1a1a;transform:scaleX(1.0068);">15.225.134</span>
<span class="t k" style="left:726.41px;top:341.06px;height:15px;line-height:15px;font-size:12.5px;color:#1a1a1a;transform:scaleX(1.0068);">00,26</span>
<span class="t k" style="left:804.31px;top:341.06px;height:15px;line-height:15px;font-size:12.5px;color:#2828f0;transform:scaleX(1.0068);">66.046</span>
<span class="t k" style="left:887.01px;top:341.06px;height:15px;line-height:15px;font-size:12.5px;color:#1a1a1a;transform:scaleX(1.0068);">3.138.547</span>
<span class="t k" style="left:985.11px;top:341.06px;height:15px;line-height:15px;font-size:12.5px;color:#1a1a1a;transform:scaleX(1.0068);">25,97</span>
<span class="t k" style="left:15.90px;top:358.17px;height:15px;line-height:15px;font-size:12.4px;color:#1a1a1a;">10</span>
<span class="t k" style="left:38.30px;top:358.21px;height:15px;line-height:15px;font-size:12.3px;color:#1a1a1a;transform:scaleX(0.9419);">EMEKLILIK YATIRIM FONLARI</span>
<div class="a" style="left:251px;top:355px;width:773px;height:0px;border-top:1px dotted rgba(100,100,100,.5);"></div>
<span class="t k" style="left:282.91px;top:358.14px;height:15px;line-height:15px;font-size:12.5px;color:#1a1a1a;transform:scaleX(1.0068);">3.818.509</span>
<span class="t k" style="left:375.11px;top:358.14px;height:15px;line-height:15px;font-size:12.5px;color:#1a1a1a;transform:scaleX(1.0068);">257.940.295</span>
<span class="t k" style="left:474.51px;top:358.14px;height:15px;line-height:15px;font-size:12.5px;color:#1a1a1a;transform:scaleX(1.0068);">04,08</span>
<span class="t k" style="left:542.11px;top:358.14px;height:15px;line-height:15px;font-size:12.5px;color:#1a1a1a;transform:scaleX(1.0068);">3.880.662</span>
<span class="t k" style="left:630.61px;top:358.14px;height:15px;line-height:15px;font-size:12.5px;color:#1a1a1a;transform:scaleX(1.0068);">241.183.143</span>
<span class="t k" style="left:726.41px;top:358.14px;height:15px;line-height:15px;font-size:12.5px;color:#1a1a1a;transform:scaleX(1.0068);">04,12</span>
<span class="t k" style="left:804.31px;top:358.14px;height:15px;line-height:15px;font-size:12.5px;color:#2828f0;transform:scaleX(1.0068);">62.153</span>
<span class="t k" style="left:875.35px;top:358.14px;height:15px;line-height:15px;font-size:12.5px;color:#1a1a1a;transform:scaleX(1.0139);">-16.757.151</span>
<span class="t k" style="left:980.44px;top:358.14px;height:15px;line-height:15px;font-size:12.5px;color:#1a1a1a;transform:scaleX(1.0202);">-06,50</span>
<span class="t k" style="left:15.90px;top:375.25px;height:15px;line-height:15px;font-size:12.4px;color:#1a1a1a;transform:scaleX(1.0715);">11</span>
<span class="t k" style="left:38.30px;top:375.29px;height:15px;line-height:15px;font-size:12.3px;color:#1a1a1a;transform:scaleX(0.9313);">OSMANLI YATIRIM MENKUL</span>
<div class="a" style="left:251px;top:372px;width:773px;height:0px;border-top:1px dotted rgba(100,100,100,.5);"></div>
<span class="t k" style="left:282.91px;top:375.22px;height:15px;line-height:15px;font-size:12.5px;color:#1a1a1a;transform:scaleX(1.0068);">1.095.165</span>
<span class="t k" style="left:382.11px;top:375.22px;height:15px;line-height:15px;font-size:12.5px;color:#1a1a1a;transform:scaleX(1.0068);">73.978.399</span>
<span class="t k" style="left:474.51px;top:375.22px;height:15px;line-height:15px;font-size:12.5px;color:#1a1a1a;transform:scaleX(1.0068);">01,17</span>
<span class="t k" style="left:542.11px;top:375.22px;height:15px;line-height:15px;font-size:12.5px;color:#1a1a1a;transform:scaleX(1.0068);">1.142.449</span>
<span class="t k" style="left:637.61px;top:375.22px;height:15px;line-height:15px;font-size:12.5px;color:#1a1a1a;transform:scaleX(1.0068);">71.003.205</span>
<span class="t k" style="left:726.41px;top:375.22px;height:15px;line-height:15px;font-size:12.5px;color:#1a1a1a;transform:scaleX(1.0068);">01,21</span>
<span class="t k" style="left:804.31px;top:375.22px;height:15px;line-height:15px;font-size:12.5px;color:#2828f0;transform:scaleX(1.0068);">47.284</span>
<span class="t k" style="left:882.34px;top:375.22px;height:15px;line-height:15px;font-size:12.5px;color:#1a1a1a;transform:scaleX(1.0148);">-2.975.194</span>
<span class="t k" style="left:980.44px;top:375.22px;height:15px;line-height:15px;font-size:12.5px;color:#1a1a1a;transform:scaleX(1.0202);">-04,02</span>
<span class="t k" style="left:15.90px;top:392.33px;height:15px;line-height:15px;font-size:12.4px;color:#1a1a1a;">12</span>
<span class="t k" style="left:38.30px;top:392.37px;height:15px;line-height:15px;font-size:12.3px;color:#1a1a1a;transform:scaleX(0.9932);">FIBA YATIRIM</span>
<div class="a" style="left:251px;top:389px;width:773px;height:0px;border-top:1px dotted rgba(100,100,100,.5);"></div>
<span class="t k" style="left:300.41px;top:392.30px;height:15px;line-height:15px;font-size:12.5px;color:#1a1a1a;transform:scaleX(1.0068);">50.537</span>
<span class="t k" style="left:389.11px;top:392.30px;height:15px;line-height:15px;font-size:12.5px;color:#1a1a1a;transform:scaleX(1.0068);">3.413.775</span>
<span class="t k" style="left:474.51px;top:392.30px;height:15px;line-height:15px;font-size:12.5px;color:#1a1a1a;transform:scaleX(1.0068);">00,05</span>
<span class="t k" style="left:559.61px;top:392.30px;height:15px;line-height:15px;font-size:12.5px;color:#1a1a1a;transform:scaleX(1.0068);">89.583</span>
<span class="t k" style="left:644.61px;top:392.30px;height:15px;line-height:15px;font-size:12.5px;color:#1a1a1a;transform:scaleX(1.0068);">5.567.583</span>
<span class="t k" style="left:726.41px;top:392.30px;height:15px;line-height:15px;font-size:12.5px;color:#1a1a1a;transform:scaleX(1.0068);">00,10</span>
<span class="t k" style="left:804.31px;top:392.30px;height:15px;line-height:15px;font-size:12.5px;color:#2828f0;transform:scaleX(1.0068);">39.046</span>
<span class="t k" style="left:887.01px;top:392.30px;height:15px;line-height:15px;font-size:12.5px;color:#1a1a1a;transform:scaleX(1.0068);">2.153.809</span>
<span class="t k" style="left:985.11px;top:392.30px;height:15px;line-height:15px;font-size:12.5px;color:#1a1a1a;transform:scaleX(1.0068);">63,09</span>
<span class="t k" style="left:15.90px;top:409.41px;height:15px;line-height:15px;font-size:12.4px;color:#1a1a1a;">13</span>
<span class="t k" style="left:38.30px;top:409.45px;height:15px;line-height:15px;font-size:12.3px;color:#1a1a1a;transform:scaleX(0.9623);">ALB YATIRIM</span>
<div class="a" style="left:251px;top:406px;width:773px;height:0px;border-top:1px dotted rgba(100,100,100,.5);"></div>
<span class="t k" style="left:293.41px;top:409.38px;height:15px;line-height:15px;font-size:12.5px;color:#1a1a1a;transform:scaleX(1.0068);">200.403</span>
<span class="t k" style="left:382.11px;top:409.38px;height:15px;line-height:15px;font-size:12.5px;color:#1a1a1a;transform:scaleX(1.0068);">13.537.223</span>
<span class="t k" style="left:474.51px;top:409.38px;height:15px;line-height:15px;font-size:12.5px;color:#1a1a1a;transform:scaleX(1.0068);">00,21</span>
<span class="t k" style="left:552.61px;top:409.38px;height:15px;line-height:15px;font-size:12.5px;color:#1a1a1a;transform:scaleX(1.0068);">239.324</span>
<span class="t k" style="left:637.61px;top:409.38px;height:15px;line-height:15px;font-size:12.5px;color:#1a1a1a;transform:scaleX(1.0068);">14.873.987</span>
<span class="t k" style="left:726.41px;top:409.38px;height:15px;line-height:15px;font-size:12.5px;color:#1a1a1a;transform:scaleX(1.0068);">00,25</span>
<span class="t k" style="left:804.31px;top:409.38px;height:15px;line-height:15px;font-size:12.5px;color:#2828f0;transform:scaleX(1.0068);">38.921</span>
<span class="t k" style="left:887.01px;top:409.38px;height:15px;line-height:15px;font-size:12.5px;color:#1a1a1a;transform:scaleX(1.0068);">1.336.763</span>
<span class="t k" style="left:985.11px;top:409.38px;height:15px;line-height:15px;font-size:12.5px;color:#1a1a1a;transform:scaleX(1.0068);">09,87</span>
<span class="t k" style="left:15.90px;top:426.49px;height:15px;line-height:15px;font-size:12.4px;color:#1a1a1a;">14</span>
<span class="t k" style="left:38.30px;top:426.53px;height:15px;line-height:15px;font-size:12.3px;color:#1a1a1a;transform:scaleX(0.9157);">PHILLIPCAPITAL MENKUL</span>
<div class="a" style="left:251px;top:423px;width:773px;height:0px;border-top:1px dotted rgba(100,100,100,.5);"></div>
<span class="t k" style="left:293.41px;top:426.46px;height:15px;line-height:15px;font-size:12.5px;color:#1a1a1a;transform:scaleX(1.0068);">212.577</span>
<span class="t k" style="left:382.11px;top:426.46px;height:15px;line-height:15px;font-size:12.5px;color:#1a1a1a;transform:scaleX(1.0068);">14.359.577</span>
<span class="t k" style="left:474.51px;top:426.46px;height:15px;line-height:15px;font-size:12.5px;color:#1a1a1a;transform:scaleX(1.0068);">00,23</span>
<span class="t k" style="left:552.61px;top:426.46px;height:15px;line-height:15px;font-size:12.5px;color:#1a1a1a;transform:scaleX(1.0068);">249.729</span>
<span class="t k" style="left:637.61px;top:426.46px;height:15px;line-height:15px;font-size:12.5px;color:#1a1a1a;transform:scaleX(1.0068);">15.520.657</span>
<span class="t k" style="left:726.41px;top:426.46px;height:15px;line-height:15px;font-size:12.5px;color:#1a1a1a;transform:scaleX(1.0068);">00,27</span>
<span class="t k" style="left:804.31px;top:426.46px;height:15px;line-height:15px;font-size:12.5px;color:#2828f0;transform:scaleX(1.0068);">37.152</span>
<span class="t k" style="left:887.01px;top:426.46px;height:15px;line-height:15px;font-size:12.5px;color:#1a1a1a;transform:scaleX(1.0068);">1.161.080</span>
<span class="t k" style="left:985.11px;top:426.46px;height:15px;line-height:15px;font-size:12.5px;color:#1a1a1a;transform:scaleX(1.0068);">08,09</span>
<span class="t k" style="left:15.90px;top:443.57px;height:15px;line-height:15px;font-size:12.4px;color:#1a1a1a;">15</span>
<span class="t k" style="left:38.30px;top:443.61px;height:15px;line-height:15px;font-size:12.3px;color:#1a1a1a;transform:scaleX(0.9107);">BIZIM MENKUL</span>
<div class="a" style="left:251px;top:441px;width:773px;height:0px;border-top:1px dotted rgba(100,100,100,.5);"></div>
<span class="t k" style="left:293.41px;top:443.54px;height:15px;line-height:15px;font-size:12.5px;color:#1a1a1a;transform:scaleX(1.0068);">166.836</span>
<span class="t k" style="left:382.11px;top:443.54px;height:15px;line-height:15px;font-size:12.5px;color:#1a1a1a;transform:scaleX(1.0220);">11.269.772</span>
<span class="t k" style="left:474.51px;top:443.54px;height:15px;line-height:15px;font-size:12.5px;color:#1a1a1a;transform:scaleX(1.0068);">00,18</span>
<span class="t k" style="left:552.61px;top:443.54px;height:15px;line-height:15px;font-size:12.5px;color:#1a1a1a;transform:scaleX(1.0068);">185.637</span>
<span class="t k" style="left:637.61px;top:443.54px;height:15px;line-height:15px;font-size:12.5px;color:#1a1a1a;transform:scaleX(1.0220);">11.537.340</span>
<span class="t k" style="left:726.41px;top:443.54px;height:15px;line-height:15px;font-size:12.5px;color:#1a1a1a;transform:scaleX(1.0068);">00,20</span>
<span class="t k" style="left:804.31px;top:443.54px;height:15px;line-height:15px;font-size:12.5px;color:#2828f0;transform:scaleX(1.0068);">18.801</span>
<span class="t k" style="left:897.51px;top:443.54px;height:15px;line-height:15px;font-size:12.5px;color:#1a1a1a;transform:scaleX(1.0068);">267.567</span>
<span class="t k" style="left:985.11px;top:443.54px;height:15px;line-height:15px;font-size:12.5px;color:#1a1a1a;transform:scaleX(1.0068);">02,37</span>
<span class="t k" style="left:15.90px;top:460.65px;height:15px;line-height:15px;font-size:12.4px;color:#1a1a1a;">16</span>
<span class="t k" style="left:38.30px;top:460.69px;height:15px;line-height:15px;font-size:12.3px;color:#1a1a1a;transform:scaleX(0.8859);">MARBAS MENKUL</span>
<div class="a" style="left:251px;top:458px;width:773px;height:0px;border-top:1px dotted rgba(100,100,100,.5);"></div>
<span class="t k" style="left:293.41px;top:460.62px;height:15px;line-height:15px;font-size:12.5px;color:#1a1a1a;transform:scaleX(1.0068);">479.203</span>
<span class="t k" style="left:382.11px;top:460.62px;height:15px;line-height:15px;font-size:12.5px;color:#1a1a1a;transform:scaleX(1.0068);">32.370.164</span>
<span class="t k" style="left:474.51px;top:460.62px;height:15px;line-height:15px;font-size:12.5px;color:#1a1a1a;transform:scaleX(1.0068);">00,51</span>
<span class="t k" style="left:552.61px;top:460.62px;height:15px;line-height:15px;font-size:12.5px;color:#1a1a1a;transform:scaleX(1.0279);">489.311</span>
<span class="t k" style="left:637.61px;top:460.62px;height:15px;line-height:15px;font-size:12.5px;color:#1a1a1a;transform:scaleX(1.0068);">30.410.679</span>
<span class="t k" style="left:726.41px;top:460.62px;height:15px;line-height:15px;font-size:12.5px;color:#1a1a1a;transform:scaleX(1.0068);">00,52</span>
<span class="t k" style="left:804.31px;top:460.62px;height:15px;line-height:15px;font-size:12.5px;color:#2828f0;transform:scaleX(1.0068);">10.108</span>
<span class="t k" style="left:882.34px;top:460.62px;height:15px;line-height:15px;font-size:12.5px;color:#1a1a1a;transform:scaleX(1.0148);">-1.959.485</span>
<span class="t k" style="left:980.44px;top:460.62px;height:15px;line-height:15px;font-size:12.5px;color:#1a1a1a;transform:scaleX(1.0202);">-06,05</span>
<span class="t k" style="left:15.90px;top:477.73px;height:15px;line-height:15px;font-size:12.4px;color:#1a1a1a;">17</span>
<span class="t k" style="left:38.30px;top:477.77px;height:15px;line-height:15px;font-size:12.3px;color:#1a1a1a;transform:scaleX(0.9559);">ANADOLU YATIRIM</span>
<div class="a" style="left:251px;top:475px;width:773px;height:0px;border-top:1px dotted rgba(100,100,100,.5);"></div>
<span class="t k" style="left:300.41px;top:477.70px;height:15px;line-height:15px;font-size:12.5px;color:#1a1a1a;transform:scaleX(1.0068);">63.474</span>
<span class="t k" style="left:389.11px;top:477.70px;height:15px;line-height:15px;font-size:12.5px;color:#1a1a1a;transform:scaleX(1.0068);">4.287.669</span>
<span class="t k" style="left:474.51px;top:477.70px;height:15px;line-height:15px;font-size:12.5px;color:#1a1a1a;transform:scaleX(1.0068);">00,07</span>
<span class="t k" style="left:559.61px;top:477.70px;height:15px;line-height:15px;font-size:12.5px;color:#1a1a1a;transform:scaleX(1.0068);">73.422</span>
<span class="t k" style="left:644.61px;top:477.70px;height:15px;line-height:15px;font-size:12.5px;color:#1a1a1a;transform:scaleX(1.0068);">4.563.177</span>
<span class="t k" style="left:726.41px;top:477.70px;height:15px;line-height:15px;font-size:12.5px;color:#1a1a1a;transform:scaleX(1.0068);">00,08</span>
<span class="t k" style="left:811.31px;top:477.70px;height:15px;line-height:15px;font-size:12.5px;color:#2828f0;transform:scaleX(1.0068);">9.948</span>
<span class="t k" style="left:897.51px;top:477.70px;height:15px;line-height:15px;font-size:12.5px;color:#1a1a1a;transform:scaleX(1.0068);">275.508</span>
<span class="t k" style="left:985.11px;top:477.70px;height:15px;line-height:15px;font-size:12.5px;color:#1a1a1a;transform:scaleX(1.0068);">06,43</span>
<span class="t k" style="left:15.90px;top:494.81px;height:15px;line-height:15px;font-size:12.4px;color:#1a1a1a;">18</span>
<span class="t k" style="left:38.30px;top:494.85px;height:15px;line-height:15px;font-size:12.3px;color:#1a1a1a;transform:scaleX(0.9350);">ING YATIRIM MENKUL</span>
<div class="a" style="left:251px;top:492px;width:773px;height:0px;border-top:1px dotted rgba(100,100,100,.5);"></div>
<span class="t k" style="left:293.41px;top:494.78px;height:15px;line-height:15px;font-size:12.5px;color:#1a1a1a;transform:scaleX(1.0068);">240.927</span>
<span class="t k" style="left:382.11px;top:494.78px;height:15px;line-height:15px;font-size:12.5px;color:#1a1a1a;transform:scaleX(1.0068);">16.274.620</span>
<span class="t k" style="left:474.51px;top:494.78px;height:15px;line-height:15px;font-size:12.5px;color:#1a1a1a;transform:scaleX(1.0068);">00,26</span>
<span class="t k" style="left:552.61px;top:494.78px;height:15px;line-height:15px;font-size:12.5px;color:#1a1a1a;transform:scaleX(1.0068);">248.938</span>
<span class="t k" style="left:637.61px;top:494.78px;height:15px;line-height:15px;font-size:12.5px;color:#1a1a1a;transform:scaleX(1.0068);">15.471.497</span>
<span class="t k" style="left:726.41px;top:494.78px;height:15px;line-height:15px;font-size:12.5px;color:#1a1a1a;transform:scaleX(1.0068);">00,26</span>
<span class="t k" style="left:811.31px;top:494.78px;height:15px;line-height:15px;font-size:12.5px;color:#2828f0;transform:scaleX(1.0376);">8.011</span>
<span class="t k" style="left:892.84px;top:494.78px;height:15px;line-height:15px;font-size:12.5px;color:#1a1a1a;transform:scaleX(1.0164);">-803.123</span>
<span class="t k" style="left:980.44px;top:494.78px;height:15px;line-height:15px;font-size:12.5px;color:#1a1a1a;transform:scaleX(1.0202);">-04,93</span>
<span class="t k" style="left:15.90px;top:511.89px;height:15px;line-height:15px;font-size:12.4px;color:#1a1a1a;">19</span>
<span class="t k" style="left:38.30px;top:511.93px;height:15px;line-height:15px;font-size:12.3px;color:#1a1a1a;transform:scaleX(0.9134);">INTEGRAL YATIRIM MENKUL DEGERL</span>
<div class="a" style="left:251px;top:509px;width:773px;height:0px;border-top:1px dotted rgba(100,100,100,.5);"></div>
<span class="t k" style="left:300.41px;top:511.86px;height:15px;line-height:15px;font-size:12.5px;color:#1a1a1a;transform:scaleX(1.0068);">31.067</span>
<span class="t k" style="left:389.11px;top:511.86px;height:15px;line-height:15px;font-size:12.5px;color:#1a1a1a;transform:scaleX(1.0068);">2.098.576</span>
<span class="t k" style="left:474.51px;top:511.86px;height:15px;line-height:15px;font-size:12.5px;color:#1a1a1a;transform:scaleX(1.0068);">00,03</span>
<span class="t k" style="left:559.61px;top:511.86px;height:15px;line-height:15px;font-size:12.5px;color:#1a1a1a;transform:scaleX(1.0068);">34.992</span>
<span class="t k" style="left:644.61px;top:511.86px;height:15px;line-height:15px;font-size:12.5px;color:#1a1a1a;transform:scaleX(1.0068);">2.174.753</span>
<span class="t k" style="left:726.41px;top:511.86px;height:15px;line-height:15px;font-size:12.5px;color:#1a1a1a;transform:scaleX(1.0068);">00,04</span>
<span class="t k" style="left:811.31px;top:511.86px;height:15px;line-height:15px;font-size:12.5px;color:#2828f0;transform:scaleX(1.0068);">3.925</span>
<span class="t k" style="left:904.51px;top:511.86px;height:15px;line-height:15px;font-size:12.5px;color:#1a1a1a;transform:scaleX(1.0068);">76.177</span>
<span class="t k" style="left:985.11px;top:511.86px;height:15px;line-height:15px;font-size:12.5px;color:#1a1a1a;transform:scaleX(1.0068);">03,63</span>
<span class="t k" style="left:15.90px;top:528.97px;height:15px;line-height:15px;font-size:12.4px;color:#1a1a1a;">20</span>
<span class="t k" style="left:38.30px;top:529.01px;height:15px;line-height:15px;font-size:12.3px;color:#1a1a1a;transform:scaleX(0.9367);">BTCTURK YATIRIM</span>
<div class="a" style="left:251px;top:526px;width:773px;height:0px;border-top:1px dotted rgba(100,100,100,.5);"></div>
<span class="t k" style="left:293.41px;top:528.94px;height:15px;line-height:15px;font-size:12.5px;color:#1a1a1a;transform:scaleX(1.0068);">143.270</span>
<span class="t k" style="left:389.11px;top:528.94px;height:15px;line-height:15px;font-size:12.5px;color:#1a1a1a;transform:scaleX(1.0068);">9.677.889</span>
<span class="t k" style="left:474.51px;top:528.94px;height:15px;line-height:15px;font-size:12.5px;color:#1a1a1a;transform:scaleX(1.0068);">00,15</span>
<span class="t k" style="left:552.61px;top:528.94px;height:15px;line-height:15px;font-size:12.5px;color:#1a1a1a;transform:scaleX(1.0068);">146.365</span>
<span class="t k" style="left:644.61px;top:528.94px;height:15px;line-height:15px;font-size:12.5px;color:#1a1a1a;transform:scaleX(1.0068);">9.096.585</span>
<span class="t k" style="left:726.41px;top:528.94px;height:15px;line-height:15px;font-size:12.5px;color:#1a1a1a;transform:scaleX(1.0068);">00,16</span>
<span class="t k" style="left:811.31px;top:528.94px;height:15px;line-height:15px;font-size:12.5px;color:#2828f0;transform:scaleX(1.0068);">3.095</span>
<span class="t k" style="left:892.84px;top:528.94px;height:15px;line-height:15px;font-size:12.5px;color:#1a1a1a;transform:scaleX(1.0164);">-581.304</span>
<span class="t k" style="left:980.44px;top:528.94px;height:15px;line-height:15px;font-size:12.5px;color:#1a1a1a;transform:scaleX(1.0202);">-06,01</span>
<span class="t k" style="left:15.90px;top:546.05px;height:15px;line-height:15px;font-size:12.4px;color:#1a1a1a;">21</span>
<span class="t k" style="left:38.30px;top:546.09px;height:15px;line-height:15px;font-size:12.3px;color:#1a1a1a;transform:scaleX(0.8902);">TURKISH MENKUL</span>
<div class="a" style="left:251px;top:543px;width:773px;height:0px;border-top:1px dotted rgba(100,100,100,.5);"></div>
<span class="t k" style="left:300.41px;top:546.02px;height:15px;line-height:15px;font-size:12.5px;color:#1a1a1a;transform:scaleX(1.0068);">14.704</span>
<span class="t k" style="left:399.61px;top:546.02px;height:15px;line-height:15px;font-size:12.5px;color:#1a1a1a;transform:scaleX(1.0068);">993.255</span>
<span class="t k" style="left:474.51px;top:546.02px;height:15px;line-height:15px;font-size:12.5px;color:#1a1a1a;transform:scaleX(1.0068);">00,02</span>
<span class="t k" style="left:559.61px;top:546.02px;height:15px;line-height:15px;font-size:12.5px;color:#1a1a1a;transform:scaleX(1.0068);">16.879</span>
<span class="t k" style="left:644.61px;top:546.02px;height:15px;line-height:15px;font-size:12.5px;color:#1a1a1a;transform:scaleX(1.0068);">1.049.030</span>
<span class="t k" style="left:726.41px;top:546.02px;height:15px;line-height:15px;font-size:12.5px;color:#1a1a1a;transform:scaleX(1.0068);">00,02</span>
<span class="t k" style="left:811.31px;top:546.02px;height:15px;line-height:15px;font-size:12.5px;color:#2828f0;transform:scaleX(1.0068);">2.175</span>
<span class="t k" style="left:904.51px;top:546.02px;height:15px;line-height:15px;font-size:12.5px;color:#1a1a1a;transform:scaleX(1.0068);">55.775</span>
<span class="t k" style="left:985.11px;top:546.02px;height:15px;line-height:15px;font-size:12.5px;color:#1a1a1a;transform:scaleX(1.0068);">05,62</span>
<span class="t k" style="left:15.90px;top:563.13px;height:15px;line-height:15px;font-size:12.4px;color:#1a1a1a;">22</span>
<span class="t k" style="left:38.30px;top:563.17px;height:15px;line-height:15px;font-size:12.3px;color:#1a1a1a;transform:scaleX(0.9144);">DEUTSCHE BANK (YABANCI)</span>
<div class="a" style="left:251px;top:560px;width:773px;height:0px;border-top:1px dotted rgba(100,100,100,.5);"></div>
<span class="t k" style="left:293.41px;top:563.10px;height:15px;line-height:15px;font-size:12.5px;color:#1a1a1a;transform:scaleX(1.0068);">168.333</span>
<span class="t k" style="left:382.11px;top:563.10px;height:15px;line-height:15px;font-size:12.5px;color:#1a1a1a;transform:scaleX(1.0220);">11.370.895</span>
<span class="t k" style="left:474.51px;top:563.10px;height:15px;line-height:15px;font-size:12.5px;color:#1a1a1a;transform:scaleX(1.0068);">00,18</span>
<span class="t k" style="left:552.61px;top:563.10px;height:15px;line-height:15px;font-size:12.5px;color:#1a1a1a;transform:scaleX(1.0068);">169.883</span>
<span class="t k" style="left:637.61px;top:563.10px;height:15px;line-height:15px;font-size:12.5px;color:#1a1a1a;transform:scaleX(1.0068);">10.558.228</span>
<span class="t k" style="left:726.41px;top:563.10px;height:15px;line-height:15px;font-size:12.5px;color:#1a1a1a;transform:scaleX(1.0068);">00,18</span>
<span class="t k" style="left:811.31px;top:563.10px;height:15px;line-height:15px;font-size:12.5px;color:#2828f0;transform:scaleX(1.0068);">1.550</span>
<span class="t k" style="left:892.84px;top:563.10px;height:15px;line-height:15px;font-size:12.5px;color:#1a1a1a;transform:scaleX(1.0164);">-812.666</span>
<span class="t k" style="left:980.44px;top:563.10px;height:15px;line-height:15px;font-size:12.5px;color:#1a1a1a;transform:scaleX(1.0202);">-07,15</span>
<span class="t k" style="left:15.90px;top:580.21px;height:15px;line-height:15px;font-size:12.4px;color:#1a1a1a;">23</span>
<span class="t k" style="left:38.30px;top:580.25px;height:15px;line-height:15px;font-size:12.3px;color:#1a1a1a;transform:scaleX(0.8848);">ACAR MENKUL DEGERLER</span>
<div class="a" style="left:251px;top:577px;width:773px;height:0px;border-top:1px dotted rgba(100,100,100,.5);"></div>
<span class="t k" style="left:300.41px;top:580.18px;height:15px;line-height:15px;font-size:12.5px;color:#1a1a1a;transform:scaleX(1.0068);">16.983</span>
<span class="t k" style="left:389.11px;top:580.18px;height:15px;line-height:15px;font-size:12.5px;color:#1a1a1a;transform:scaleX(1.0068);">1.147.202</span>
<span class="t k" style="left:474.51px;top:580.18px;height:15px;line-height:15px;font-size:12.5px;color:#1a1a1a;transform:scaleX(1.0068);">00,02</span>
<span class="t k" style="left:559.61px;top:580.18px;height:15px;line-height:15px;font-size:12.5px;color:#1a1a1a;transform:scaleX(1.0068);">18.489</span>
<span class="t k" style="left:644.61px;top:580.18px;height:15px;line-height:15px;font-size:12.5px;color:#1a1a1a;transform:scaleX(1.0068);">1.149.091</span>
<span class="t k" style="left:726.41px;top:580.18px;height:15px;line-height:15px;font-size:12.5px;color:#1a1a1a;transform:scaleX(1.0068);">00,02</span>
<span class="t k" style="left:811.31px;top:580.18px;height:15px;line-height:15px;font-size:12.5px;color:#2828f0;transform:scaleX(1.0068);">1.506</span>
<span class="t k" style="left:911.51px;top:580.18px;height:15px;line-height:15px;font-size:12.5px;color:#1a1a1a;transform:scaleX(1.0068);">1.890</span>
<span class="t k" style="left:985.11px;top:580.18px;height:15px;line-height:15px;font-size:12.5px;color:#1a1a1a;transform:scaleX(1.0068);">00,16</span>
<span class="t k" style="left:15.90px;top:597.29px;height:15px;line-height:15px;font-size:12.4px;color:#1a1a1a;">24</span>
<span class="t k" style="left:38.30px;top:597.33px;height:15px;line-height:15px;font-size:12.3px;color:#1a1a1a;transform:scaleX(0.8944);">NCM INVESTMENT</span>
<div class="a" style="left:251px;top:594px;width:773px;height:0px;border-top:1px dotted rgba(100,100,100,.5);"></div>
<span class="t k" style="left:307.41px;top:597.26px;height:15px;line-height:15px;font-size:12.5px;color:#1a1a1a;transform:scaleX(1.0068);">4.471</span>
<span class="t k" style="left:399.61px;top:597.26px;height:15px;line-height:15px;font-size:12.5px;color:#1a1a1a;transform:scaleX(1.0068);">302.016</span>
<span class="t k" style="left:474.51px;top:597.26px;height:15px;line-height:15px;font-size:12.5px;color:#1a1a1a;transform:scaleX(1.0068);">00,00</span>
<span class="t k" style="left:566.61px;top:597.26px;height:15px;line-height:15px;font-size:12.5px;color:#1a1a1a;transform:scaleX(1.0068);">5.515</span>
<span class="t k" style="left:655.11px;top:597.26px;height:15px;line-height:15px;font-size:12.5px;color:#1a1a1a;transform:scaleX(1.0068);">342.757</span>
<span class="t k" style="left:726.41px;top:597.26px;height:15px;line-height:15px;font-size:12.5px;color:#1a1a1a;transform:scaleX(1.0068);">00,01</span>
<span class="t k" style="left:811.31px;top:597.26px;height:15px;line-height:15px;font-size:12.5px;color:#2828f0;transform:scaleX(1.0068);">1.044</span>
<span class="t k" style="left:904.51px;top:597.26px;height:15px;line-height:15px;font-size:12.5px;color:#1a1a1a;transform:scaleX(1.0068);">40.741</span>
<span class="t k" style="left:985.11px;top:597.26px;height:15px;line-height:15px;font-size:12.5px;color:#1a1a1a;transform:scaleX(1.0068);">13,49</span>
<span class="t k" style="left:15.90px;top:614.37px;height:15px;line-height:15px;font-size:12.4px;color:#1a1a1a;">25</span>
<span class="t k" style="left:38.30px;top:614.41px;height:15px;line-height:15px;font-size:12.3px;color:#1a1a1a;transform:scaleX(0.9214);">GCM YATIRIM MENKUL</span>
<div class="a" style="left:251px;top:611px;width:773px;height:0px;border-top:1px dotted rgba(100,100,100,.5);"></div>
<span class="t k" style="left:307.41px;top:614.34px;height:15px;line-height:15px;font-size:12.5px;color:#1a1a1a;transform:scaleX(1.0068);">9.407</span>
<span class="t k" style="left:399.61px;top:614.34px;height:15px;line-height:15px;font-size:12.5px;color:#1a1a1a;transform:scaleX(1.0068);">635.443</span>
<span class="t k" style="left:474.51px;top:614.34px;height:15px;line-height:15px;font-size:12.5px;color:#1a1a1a;transform:scaleX(1.0068);">00,01</span>
<span class="t k" style="left:566.61px;top:614.34px;height:15px;line-height:15px;font-size:12.5px;color:#1a1a1a;transform:scaleX(1.0068);">9.843</span>
<span class="t k" style="left:655.11px;top:614.34px;height:15px;line-height:15px;font-size:12.5px;color:#1a1a1a;transform:scaleX(1.0279);">611.742</span>
<span class="t k" style="left:726.41px;top:614.34px;height:15px;line-height:15px;font-size:12.5px;color:#1a1a1a;transform:scaleX(1.0068);">00,01</span>
<span class="t k" style="left:821.80px;top:614.34px;height:15px;line-height:15px;font-size:12.5px;color:#2828f0;transform:scaleX(1.0067);">436</span>
<span class="t k" style="left:899.84px;top:614.34px;height:15px;line-height:15px;font-size:12.5px;color:#1a1a1a;transform:scaleX(1.0180);">-23.700</span>
<span class="t k" style="left:980.44px;top:614.34px;height:15px;line-height:15px;font-size:12.5px;color:#1a1a1a;transform:scaleX(1.0202);">-03,73</span>
<span class="t k" style="left:15.90px;top:631.45px;height:15px;line-height:15px;font-size:12.4px;color:#1a1a1a;">26</span>
<span class="t k" style="left:38.30px;top:631.49px;height:15px;line-height:15px;font-size:12.3px;color:#1a1a1a;transform:scaleX(0.8950);">COLENDI MENKUL</span>
<div class="a" style="left:251px;top:628px;width:773px;height:0px;border-top:1px dotted rgba(100,100,100,.5);"></div>
<span class="t k" style="left:317.90px;top:631.42px;height:15px;line-height:15px;font-size:12.5px;color:#1a1a1a;transform:scaleX(1.0067);">107</span>
<span class="t k" style="left:413.61px;top:631.42px;height:15px;line-height:15px;font-size:12.5px;color:#1a1a1a;transform:scaleX(1.0068);">7.228</span>
<span class="t k" style="left:474.51px;top:631.42px;height:15px;line-height:15px;font-size:12.5px;color:#1a1a1a;transform:scaleX(1.0068);">00,00</span>
<span class="t k" style="left:577.10px;top:631.42px;height:15px;line-height:15px;font-size:12.5px;color:#1a1a1a;transform:scaleX(1.0067);">126</span>
<span class="t k" style="left:669.11px;top:631.42px;height:15px;line-height:15px;font-size:12.5px;color:#1a1a1a;transform:scaleX(1.0068);">7.831</span>
<span class="t k" style="left:726.41px;top:631.42px;height:15px;line-height:15px;font-size:12.5px;color:#1a1a1a;transform:scaleX(1.0068);">00,00</span>
<span class="t k" style="left:828.80px;top:631.42px;height:15px;line-height:15px;font-size:12.5px;color:#2828f0;transform:scaleX(1.0067);">19</span>
<span class="t k" style="left:922.00px;top:631.42px;height:15px;line-height:15px;font-size:12.5px;color:#1a1a1a;transform:scaleX(1.0067);">603</span>
<span class="t k" style="left:985.11px;top:631.42px;height:15px;line-height:15px;font-size:12.5px;color:#1a1a1a;transform:scaleX(1.0068);">08,34</span>
<span class="t k" style="left:15.90px;top:648.53px;height:15px;line-height:15px;font-size:12.4px;color:#1a1a1a;">27</span>
<span class="t k" style="left:38.30px;top:648.57px;height:15px;line-height:15px;font-size:12.3px;color:#1a1a1a;transform:scaleX(0.9221);">TURK EKONOMI BANKASI A.S.</span>
<div class="a" style="left:251px;top:646px;width:773px;height:0px;border-top:1px dotted rgba(100,100,100,.5);"></div>
<span class="t k" style="left:300.41px;top:648.50px;height:15px;line-height:15px;font-size:12.5px;color:#1a1a1a;transform:scaleX(1.0068);">26.997</span>
<span class="t k" style="left:389.11px;top:648.50px;height:15px;line-height:15px;font-size:12.5px;color:#1a1a1a;transform:scaleX(1.0068);">1.823.647</span>
<span class="t k" style="left:474.51px;top:648.50px;height:15px;line-height:15px;font-size:12.5px;color:#1a1a1a;transform:scaleX(1.0068);">00,03</span>
<span class="t k" style="left:559.61px;top:648.50px;height:15px;line-height:15px;font-size:12.5px;color:#1a1a1a;transform:scaleX(1.0068);">26.998</span>
<span class="t k" style="left:644.61px;top:648.50px;height:15px;line-height:15px;font-size:12.5px;color:#1a1a1a;transform:scaleX(1.0068);">1.677.926</span>
<span class="t k" style="left:726.41px;top:648.50px;height:15px;line-height:15px;font-size:12.5px;color:#1a1a1a;transform:scaleX(1.0068);">00,03</span>
<span class="t k" style="left:835.80px;top:648.50px;height:15px;line-height:15px;font-size:12.5px;color:#2828f0;transform:scaleX(1.0067);">1</span>
<span class="t k" style="left:892.84px;top:648.50px;height:15px;line-height:15px;font-size:12.5px;color:#1a1a1a;transform:scaleX(1.0164);">-145.722</span>
<span class="t k" style="left:980.44px;top:648.50px;height:15px;line-height:15px;font-size:12.5px;color:#1a1a1a;transform:scaleX(1.0202);">-07,99</span>
<span class="t k" style="left:15.90px;top:665.61px;height:15px;line-height:15px;font-size:12.4px;color:#1a1a1a;">28</span>
<span class="t k" style="left:38.30px;top:665.65px;height:15px;line-height:15px;font-size:12.3px;color:#1a1a1a;transform:scaleX(0.8323);">XXX</span>
<div class="a" style="left:251px;top:663px;width:773px;height:0px;border-top:1px dotted rgba(100,100,100,.5);"></div>
<span class="t k" style="left:300.41px;top:665.58px;height:15px;line-height:15px;font-size:12.5px;color:#1a1a1a;transform:scaleX(1.0068);">25.000</span>
<span class="t k" style="left:389.11px;top:665.58px;height:15px;line-height:15px;font-size:12.5px;color:#1a1a1a;transform:scaleX(1.0068);">1.688.750</span>
<span class="t k" style="left:474.51px;top:665.58px;height:15px;line-height:15px;font-size:12.5px;color:#1a1a1a;transform:scaleX(1.0068);">00,03</span>
<span class="t k" style="left:559.61px;top:665.58px;height:15px;line-height:15px;font-size:12.5px;color:#1a1a1a;transform:scaleX(1.0068);">25.000</span>
<span class="t k" style="left:644.61px;top:665.58px;height:15px;line-height:15px;font-size:12.5px;color:#1a1a1a;transform:scaleX(1.0068);">1.553.750</span>
<span class="t k" style="left:726.41px;top:665.58px;height:15px;line-height:15px;font-size:12.5px;color:#1a1a1a;transform:scaleX(1.0068);">00,03</span>
<span class="t k" style="left:835.80px;top:665.58px;height:15px;line-height:15px;font-size:12.5px;color:#2828f0;transform:scaleX(1.0067);">0</span>
<span class="t k" style="left:892.84px;top:665.58px;height:15px;line-height:15px;font-size:12.5px;color:#1a1a1a;transform:scaleX(1.0164);">-135.000</span>
<span class="t k" style="left:980.44px;top:665.58px;height:15px;line-height:15px;font-size:12.5px;color:#1a1a1a;transform:scaleX(1.0202);">-07,99</span>
<span class="t k" style="left:15.90px;top:682.69px;height:15px;line-height:15px;font-size:12.4px;color:#1a1a1a;">29</span>
<span class="t k" style="left:38.30px;top:682.73px;height:15px;line-height:15px;font-size:12.3px;color:#1a1a1a;transform:scaleX(0.9612);">YATIRIM ORTAKLIKLARI</span>
<div class="a" style="left:251px;top:680px;width:773px;height:0px;border-top:1px dotted rgba(100,100,100,.5);"></div>
<span class="t k" style="left:307.41px;top:682.66px;height:15px;line-height:15px;font-size:12.5px;color:#1a1a1a;transform:scaleX(1.0068);">7.500</span>
<span class="t k" style="left:399.61px;top:682.66px;height:15px;line-height:15px;font-size:12.5px;color:#1a1a1a;transform:scaleX(1.0068);">506.625</span>
<span class="t k" style="left:474.51px;top:682.66px;height:15px;line-height:15px;font-size:12.5px;color:#1a1a1a;transform:scaleX(1.0068);">00,01</span>
<span class="t k" style="left:566.61px;top:682.66px;height:15px;line-height:15px;font-size:12.5px;color:#1a1a1a;transform:scaleX(1.0068);">7.500</span>
<span class="t k" style="left:655.11px;top:682.66px;height:15px;line-height:15px;font-size:12.5px;color:#1a1a1a;transform:scaleX(1.0068);">466.125</span>
<span class="t k" style="left:726.41px;top:682.66px;height:15px;line-height:15px;font-size:12.5px;color:#1a1a1a;transform:scaleX(1.0068);">00,01</span>
<span class="t k" style="left:835.80px;top:682.66px;height:15px;line-height:15px;font-size:12.5px;color:#2828f0;transform:scaleX(1.0067);">0</span>
<span class="t k" style="left:899.84px;top:682.66px;height:15px;line-height:15px;font-size:12.5px;color:#1a1a1a;transform:scaleX(1.0180);">-40.500</span>
<span class="t k" style="left:980.44px;top:682.66px;height:15px;line-height:15px;font-size:12.5px;color:#1a1a1a;transform:scaleX(1.0202);">-07,99</span>
<span class="t k" style="left:15.90px;top:699.77px;height:15px;line-height:15px;font-size:12.4px;color:#1a1a1a;">30</span>
<span class="t k" style="left:38.30px;top:699.81px;height:15px;line-height:15px;font-size:12.3px;color:#1a1a1a;transform:scaleX(0.9409);">IS BANKASI A.S.</span>
<div class="a" style="left:251px;top:697px;width:773px;height:0px;border-top:1px dotted rgba(100,100,100,.5);"></div>
<span class="t k" style="left:300.41px;top:699.74px;height:15px;line-height:15px;font-size:12.5px;color:#1a1a1a;transform:scaleX(1.0068);">29.796</span>
<span class="t k" style="left:389.11px;top:699.74px;height:15px;line-height:15px;font-size:12.5px;color:#1a1a1a;transform:scaleX(1.0068);">2.012.720</span>
<span class="t k" style="left:474.51px;top:699.74px;height:15px;line-height:15px;font-size:12.5px;color:#1a1a1a;transform:scaleX(1.0068);">00,03</span>
<span class="t k" style="left:559.61px;top:699.74px;height:15px;line-height:15px;font-size:12.5px;color:#1a1a1a;transform:scaleX(1.0068);">29.796</span>
<span class="t k" style="left:644.61px;top:699.74px;height:15px;line-height:15px;font-size:12.5px;color:#1a1a1a;transform:scaleX(1.0068);">1.851.821</span>
<span class="t k" style="left:726.41px;top:699.74px;height:15px;line-height:15px;font-size:12.5px;color:#1a1a1a;transform:scaleX(1.0068);">00,03</span>
<span class="t k" style="left:835.80px;top:699.74px;height:15px;line-height:15px;font-size:12.5px;color:#2828f0;transform:scaleX(1.0067);">0</span>
<span class="t k" style="left:892.84px;top:699.74px;height:15px;line-height:15px;font-size:12.5px;color:#1a1a1a;transform:scaleX(1.0164);">-160.898</span>
<span class="t k" style="left:980.44px;top:699.74px;height:15px;line-height:15px;font-size:12.5px;color:#1a1a1a;transform:scaleX(1.0202);">-07,99</span>
<div class="a" style="left:11px;top:714px;width:1013px;height:1px;background:#666;"></div>
</body></html>
